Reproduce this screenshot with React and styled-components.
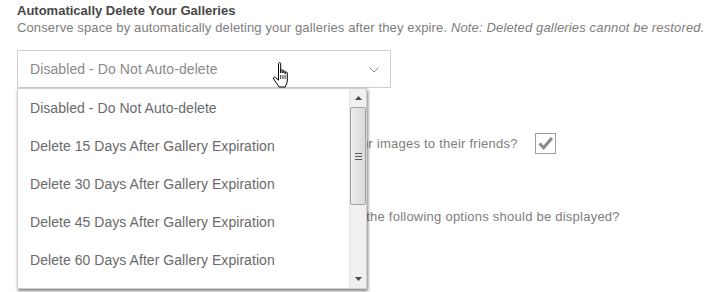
import React from 'react'
import styled, { createGlobalStyle } from 'styled-components'

const GlobalStyle = createGlobalStyle`
  html, body { margin: 0; padding: 0; background: #fff; }
  body { font-family: "Liberation Sans", Arial, sans-serif; }
`

const options = [
  'Disabled - Do Not Auto-delete',
  'Delete 15 Days After Gallery Expiration',
  'Delete 30 Days After Gallery Expiration',
  'Delete 45 Days After Gallery Expiration',
  'Delete 60 Days After Gallery Expiration',
]

function App() {
  return (
    <Page>
      <GlobalStyle />
      <Heading>Automatically Delete Your Galleries</Heading>
      <Description>
        Conserve space by automatically deleting your galleries after they expire.{' '}
        <em>Note: Deleted galleries cannot be restored.</em>
      </Description>

      <SelectWrap>
        <SelectBox>
          <span>Disabled - Do Not Auto-delete</span>
          <Chevron viewBox="0 0 10 6">
            <path d="M0.5 0.5 L5 5 L9.5 0.5" fill="none" stroke="#8c8c8c" strokeWidth="1" />
          </Chevron>
        </SelectBox>

        <Pointer viewBox="1.5 1 16 26">
          <path
            d="M7 2.5c0-1.2 2.2-1.2 2.2 0v9.5V9.6c0-1.2 2.2-1.2 2.2 0V12v-1.4c0-1.2 2.2-1.2 2.2 0V12.8v-0.9c0-1.2 2.2-1.2 2.2 0V19c0 3-1.4 5-2 7H7.6C6.5 24 4 21 2.2 18c-0.8-1.3 0.6-2.6 1.8-1.5L7 19.2z"
            fill="#fff"
            stroke="#000"
            strokeWidth="1"
            strokeLinejoin="round"
          />
          <path d="M9.2 14v4M11.4 14v4M13.6 14v4" stroke="#000" strokeWidth="0.8" />
        </Pointer>

        <Dropdown>
          <OptionList>
            {options.map((o) => (
              <Option key={o}>{o}</Option>
            ))}
          </OptionList>
          <Scrollbar>
            <Arrow>
              <svg viewBox="0 0 7 4" width="7" height="4"><path d="M0 4 L3.5 0 L7 4z" fill="#4a4a4a" /></svg>
            </Arrow>
            <Track>
              <Thumb>
                <Grip />
              </Thumb>
            </Track>
            <Arrow>
              <svg viewBox="0 0 7 4" width="7" height="4"><path d="M0 0 L3.5 4 L7 0z" fill="#4a4a4a" /></svg>
            </Arrow>
          </Scrollbar>
        </Dropdown>
      </SelectWrap>

      <QuestionRow $gap={44}>
        <Question>Would you like to enable your website visitors to share your images to their friends?</Question>
        <Checkbox>
          <svg viewBox="0 0 20 20" width="17" height="17">
            <path d="M3 10 L7.8 15 L17.5 3.5" fill="none" stroke="#8a8a8a" strokeWidth="3.6" />
          </svg>
        </Checkbox>
      </QuestionRow>

      <QuestionRow $gap={51}>
        <Question>When your customers are viewing their galleries, which of the following options should be displayed?</Question>
      </QuestionRow>
    </Page>
  )
}

export default App

const Page = styled.div`
  padding: 3px 0 0 17px;
  width: 716px;
  height: 292px;
  box-sizing: border-box;
  overflow: hidden;
  position: relative;
`

const Heading = styled.div`
  font-size: 13px;
  font-weight: bold;
  color: #474747;
  line-height: 16px;
`

const Description = styled.div`
  font-size: 13px;
  color: #7d7d7d;
  line-height: 16px;
  margin-top: 1px;
  letter-spacing: 0.12px;
  white-space: nowrap;

  em {
    font-style: italic;
    letter-spacing: 0.15px;
  }
`

const SelectWrap = styled.div`
  position: relative;
  margin-top: 14px;
  width: 374px;
`

const SelectBox = styled.div`
  height: 38px;
  border: 1px solid #cfcfcf;
  box-sizing: border-box;
  display: flex;
  align-items: center;
  justify-content: space-between;
  padding: 0 11px 0 12px;
  font-size: 14px;
  color: #8a8a8a;
  letter-spacing: 0.08px;
`

const Chevron = styled.svg`
  width: 10px;
  height: 6px;
  margin-top: 1px;
`

const Pointer = styled.svg`
  position: absolute;
  left: 256px;
  top: 12px;
  width: 16px;
  height: 26px;
  z-index: 3;
`

const Dropdown = styled.div`
  position: absolute;
  top: 38px;
  left: 0;
  width: 350px;
  height: 201px;
  background: #fff;
  border: 1px solid #d0d0d0;
  box-sizing: border-box;
  box-shadow: 1px 2px 3px rgba(0, 0, 0, 0.5);
  display: flex;
  z-index: 2;
`

const OptionList = styled.div`
  flex: 1;
  display: flex;
  flex-direction: column;
`

const Option = styled.div`
  height: 38px;
  flex-shrink: 0;
  display: flex;
  align-items: center;
  padding-left: 12px;
  font-size: 14px;
  color: #6a6a6a;
  letter-spacing: 0.05px;
`

const Scrollbar = styled.div`
  width: 16px;
  background: #f0f0f0;
  border-left: 1px solid #e6e6e6;
  display: flex;
  flex-direction: column;
`

const Arrow = styled.div`
  height: 18px;
  display: flex;
  align-items: center;
  justify-content: center;
`

const Track = styled.div`
  flex: 1;
`

const Thumb = styled.div`
  height: 98px;
  border: 1px solid #a3a3a3;
  border-radius: 2px;
  background: linear-gradient(to right, #ececec, #d9d9d9);
  box-sizing: border-box;
  display: flex;
  align-items: center;
  justify-content: center;
`

const Grip = styled.div`
  width: 7px;
  height: 5px;
  border-top: 1px solid #5a5a5a;
  border-bottom: 1px solid #5a5a5a;
  position: relative;
  &::after {
    content: '';
    position: absolute;
    left: 0;
    right: 0;
    top: 2px;
    border-top: 1px solid #5a5a5a;
  }
`

const QuestionRow = styled.div`
  display: flex;
  align-items: center;
  margin-top: ${(p) => p.$gap}px;
  height: 22px;
`

const Question = styled.div`
  font-size: 13px;
  color: #7d7d7d;
  letter-spacing: 0.24px;
  white-space: nowrap;
`

const Checkbox = styled.div`
  width: 21px;
  height: 21px;
  border: 1px solid #9c9c9c;
  box-sizing: border-box;
  margin-left: 17px;
  display: flex;
  align-items: center;
  justify-content: center;
`
